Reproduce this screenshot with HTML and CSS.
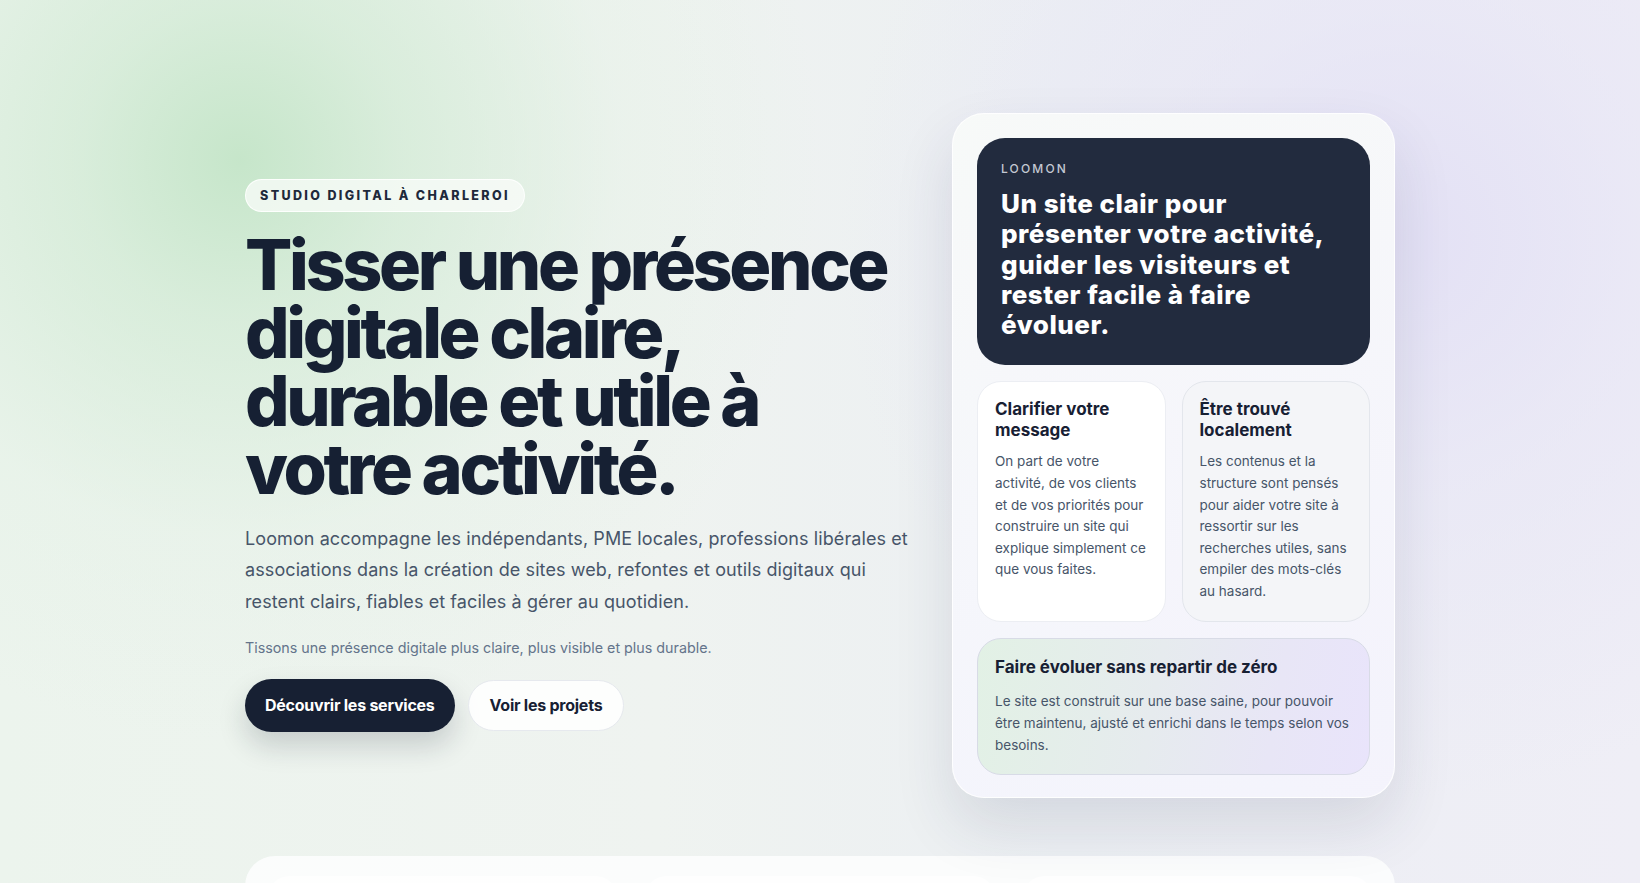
FILE: index.html
```html
<!DOCTYPE html>
<html lang="fr">
<head>
<meta charset="utf-8">
<title>Loomon — Studio digital à Charleroi</title>
<link rel="stylesheet" href="styles.css">
</head>
<body>
<main class="page">
  <section class="hero">
    <div class="hero-inner">
      <div class="hero-copy">
        <span class="badge">Studio digital à Charleroi</span>
        <h1 class="hero-title">Tisser une présence digitale claire, durable et utile à votre activité.</h1>
        <p class="hero-lead">Loomon accompagne les indépendants, PME locales, professions libérales et associations dans la création de sites web, refontes et outils digitaux qui restent clairs, fiables et faciles à gérer au quotidien.</p>
        <p class="hero-tagline">Tissons une présence digitale plus claire, plus visible et plus durable.</p>
        <div class="hero-actions">
          <a class="btn btn-dark" href="#services">Découvrir les services</a>
          <a class="btn btn-light" href="#projets">Voir les projets</a>
        </div>
      </div>
      <aside class="panel">
        <div class="panel-dark">
          <p class="panel-eyebrow">Loomon</p>
          <p class="panel-title">Un site clair pour présenter votre activité, guider les visiteurs et rester facile à faire évoluer.</p>
        </div>
        <div class="panel-grid">
          <div class="mini-card mini-white">
            <h3 class="mini-title">Clarifier votre message</h3>
            <p class="mini-text">On part de votre activité, de vos clients et de vos priorités pour construire un site qui explique simplement ce que vous faites.</p>
          </div>
          <div class="mini-card mini-grey">
            <h3 class="mini-title">Être trouvé localement</h3>
            <p class="mini-text">Les contenus et la structure sont pensés pour aider votre site à ressortir sur les recherches utiles, sans empiler des mots-clés au hasard.</p>
          </div>
        </div>
        <div class="panel-wide">
          <h3 class="mini-title">Faire évoluer sans repartir de zéro</h3>
          <p class="wide-text">Le site est construit sur une base saine, pour pouvoir être maintenu, ajusté et enrichi dans le temps selon vos besoins.</p>
        </div>
      </aside>
    </div>
  </section>
  <section class="next" id="services">
    <div class="next-inner">
      <div class="next-card"></div>
      <div class="next-card"></div>
      <div class="next-card"></div>
    </div>
  </section>
</main>
</body>
</html>
```

FILE: styles.css
```css
* { box-sizing: border-box; }

html, body {
  margin: 0;
  padding: 0;
}

body {
  font-family: "Inter", "Noto Sans", "Liberation Sans", sans-serif;
  color: #172033;
  min-height: 100vh;
  background:
    radial-gradient(circle at 240px 160px, rgba(196, 229, 200, 0.95) 0, rgba(208, 234, 211, 0.7) 160px, rgba(226, 241, 228, 0.35) 380px, rgba(240, 245, 241, 0) 580px),
    radial-gradient(circle at 1400px 240px, rgba(226, 223, 245, 0.9) 0, rgba(230, 228, 246, 0.55) 240px, rgba(238, 238, 246, 0) 560px),
    linear-gradient(90deg, #ecf4ed 0%, #eff3f0 40%, #eceff3 65%, #efeef6 100%);
  overflow: hidden;
}

.page {
  width: 100%;
}

.hero {
  padding: 113px 0 58px;
}

.hero-inner {
  width: 1150px;
  margin: 0 auto;
  display: grid;
  grid-template-columns: 1fr 443px;
  gap: 30px;
  align-items: center;
}

.hero-copy {
  display: flex;
  flex-direction: column;
  align-items: flex-start;
}

.badge {
  display: inline-block;
  height: 33px;
  line-height: 31px;
  padding: 0 14px;
  border-radius: 999px;
  background: rgba(250, 252, 250, 0.75);
  border: 1px solid rgba(255, 255, 255, 0.9);
  font-size: 12.5px;
  font-weight: 800;
  letter-spacing: 0.19em;
  text-transform: uppercase;
  color: #1e293b;
}

.hero-title {
  margin: 19px 0 0;
  max-width: 650px;
  font-size: 70px;
  line-height: 68px;
  font-weight: 800;
  letter-spacing: -0.048em;
  color: #162033;
}

.hero-lead {
  margin: 20px 0 0;
  font-size: 18px;
  line-height: 31.4px;
  color: #475569;
  max-width: 680px;
  letter-spacing: 0.005em;
}

.hero-tagline {
  margin: 20px 0 0;
  font-size: 14.3px;
  line-height: 22px;
  color: #64748b;
}

.hero-actions {
  margin-top: 20px;
  display: flex;
  gap: 13px;
  align-items: center;
}

.btn {
  display: inline-flex;
  align-items: center;
  justify-content: center;
  border-radius: 999px;
  font-size: 16px;
  font-weight: 700;
  text-decoration: none;
  letter-spacing: -0.015em;
}

.btn-dark {
  height: 53px;
  padding: 0 20px;
  background: #172033;
  color: #ffffff;
  box-shadow: 0 14px 28px rgba(23, 32, 51, 0.18);
}

.btn-light {
  height: 51px;
  padding: 0 21px;
  background: rgba(255, 255, 255, 0.85);
  border: 1px solid #e6e9ee;
  color: #172033;
}

/* Panel */
.panel {
  padding: 24px 24px 22px;
  border-radius: 32px;
  background: linear-gradient(160deg, rgba(248, 250, 248, 0.95) 0%, rgba(246, 246, 251, 0.95) 55%, rgba(244, 243, 252, 0.95) 100%);
  border: 1px solid rgba(255, 255, 255, 0.9);
  box-shadow: 0 28px 60px rgba(40, 50, 80, 0.12);
  display: flex;
  flex-direction: column;
  gap: 16px;
}

.panel-dark {
  background: #222b3e;
  border-radius: 28px;
  padding: 23px 24px 25px;
  color: #ffffff;
}

.panel-eyebrow {
  margin: 0;
  font-size: 12px;
  line-height: 16px;
  font-weight: 500;
  letter-spacing: 0.18em;
  text-transform: uppercase;
  color: #c3c8d2;
}

.panel-title {
  margin: 12px 0 0;
  font-size: 26px;
  line-height: 30.3px;
  font-weight: 800;
  letter-spacing: 0.02em;
  color: #ffffff;
}

.panel-grid {
  display: grid;
  grid-template-columns: 1fr 1fr;
  gap: 16px;
}

.mini-card {
  border-radius: 24px;
  padding: 17px 17px 18px;
  min-height: 235px;
}

.mini-white {
  background: #ffffff;
  border: 1px solid #eceef3;
}

.mini-grey {
  background: #f4f5f8;
  border: 1px solid #e3e6ec;
}

.mini-title {
  margin: 0;
  font-size: 17px;
  line-height: 21px;
  font-weight: 700;
  letter-spacing: 0;
  color: #172033;
}

.mini-text {
  margin: 10px 0 0;
  font-size: 13.5px;
  line-height: 21.6px;
  color: #475569;
}

.panel-wide {
  border-radius: 24px;
  padding: 18px 17px 18px;
  background: linear-gradient(100deg, #e2f1e5 0%, #e6ebee 45%, #e8e6f6 75%, #e9e4fb 100%);
  border: 1px solid #d8dbe6;
}

.wide-text {
  margin: 12px 0 0;
  font-size: 13.5px;
  line-height: 22px;
  color: #475569;
}

/* Next section */
.next {
  padding: 0;
}

.next-inner {
  width: 1150px;
  margin: 0 auto;
  height: 200px;
  border-radius: 30px 30px 0 0;
  background: rgba(252, 253, 253, 0.92);
  padding: 20px 24px 0;
  display: grid;
  grid-template-columns: repeat(3, 1fr);
  gap: 30px;
}

.next-card {
  border-radius: 20px;
  background: rgba(255, 255, 255, 0.7);
}
```
